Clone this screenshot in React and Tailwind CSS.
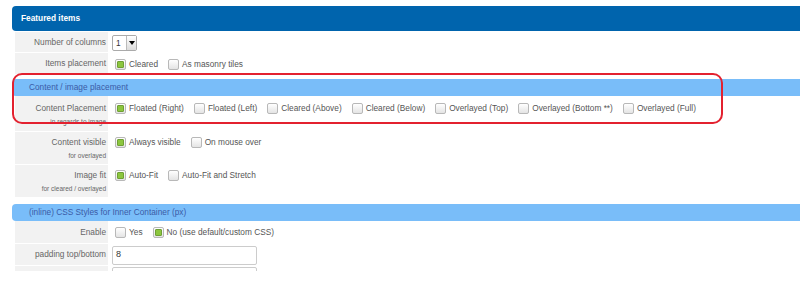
import React from "react";

const Check = ({ on }) => (
  <span className="w-[11px] h-[11px] shrink-0 border border-[#b8b8b8] rounded-[2px] bg-linear-to-b from-white to-[#e4e4e4] flex items-center justify-center">
    {on && <span className="w-[7px] h-[7px] bg-[#8cc63e] border border-[#6f9f34] rounded-[1px]" />}
  </span>
);

const Options = ({ items, checked }) => (
  <div className="flex items-center gap-[10px]">
    {items.map((t, i) => (
      <div key={t} className="flex items-center gap-[3px]">
        <Check on={i === checked} />
        <span className="leading-[11px] whitespace-nowrap">{t}</span>
      </div>
    ))}
  </div>
);

const Row = ({ label, sub, h, pt, center, children }) => (
  <div className={`flex ${h}`}>
    <div
      className={`w-[93px] ml-[3px] shrink-0 bg-[#f2f2f2] border-b border-white flex flex-col items-end pr-[2px] text-[#666] ${
        center ? "justify-center" : pt
      }`}
    >
      <span className="leading-[11px] whitespace-nowrap">{label}</span>
      {sub && <span className="text-[6.5px] leading-[9px] mt-[3px] whitespace-nowrap">{sub}</span>}
    </div>
    <div className={`flex-1 pl-[7px] flex ${center ? "items-center" : `items-start ${pt}`}`}>
      {children}
    </div>
  </div>
);

const Section = ({ title, className }) => (
  <div className={`h-[17px] bg-[#79bdf9] rounded-l-[4px] flex items-center pl-[17px] text-[#3b5ba6] ${className}`}>
    {title}
  </div>
);

export default function App() {
  return (
    <div className="w-[800px] h-[283px] bg-white overflow-hidden relative font-['Liberation_Sans',Arial,sans-serif] text-[8.3px] text-[#555]">
      <div className="pt-[6px] pl-[12px]">
        <div className="h-[25px] bg-[#0064ad] rounded-l-[4px] flex items-center pl-[9px] text-white font-bold">
          Featured items
        </div>
        <div className="mt-[1px]">
          <Row label="Number of columns" h="h-[21px]" center>
            <div className="w-[25px] h-[16px] -ml-[3px] border border-[#aaa] rounded-[2px] flex bg-white">
              <span className="flex-1 pl-[3px] leading-[14px] text-[#333]">1</span>
              <span className="w-[10px] border-l border-[#bbb] bg-linear-to-b from-white to-[#dcdcdc] flex items-center justify-center">
                <span className="w-0 h-0 border-l-[3px] border-r-[3px] border-t-[4px] border-l-transparent border-r-transparent border-t-black" />
              </span>
            </div>
          </Row>
          <Row label="Items placement" h="h-[22px]" center>
            <Options items={["Cleared", "As masonry tiles"]} checked={0} />
          </Row>
        </div>
        <Section title="Content / image placement" className="mt-[4px]" />
        <Row label="Content Placement" sub="in regards to image" h="h-[36px]" pt="pt-[7px]">
          <Options
            items={[
              "Floated (Right)",
              "Floated (Left)",
              "Cleared (Above)",
              "Cleared (Below)",
              "Overlayed (Top)",
              "Overlayed (Bottom **)",
              "Overlayed (Full)",
            ]}
            checked={0}
          />
        </Row>
        <Row label="Content visible" sub="for overlayed" h="h-[33px]" pt="pt-[5px]">
          <Options items={["Always visible", "On mouse over"]} checked={0} />
        </Row>
        <Row label="Image fit" sub="for cleared / overlayed" h="h-[33px]" pt="pt-[5px]">
          <Options items={["Auto-Fit", "Auto-Fit and Stretch"]} checked={0} />
        </Row>
        <Section title="(inline) CSS Styles for Inner Container (px)" className="mt-[6px]" />
        <Row label="Enable" h="h-[23px]" center>
          <Options items={["Yes", "No (use default/custom CSS)"]} checked={1} />
        </Row>
        <Row label="padding top/bottom" h="h-[22px]" center>
          <div className="w-[145px] h-[19px] -ml-[3px] border border-[#ccc] rounded-[2px] pl-[3px] flex items-center text-[9px] text-[#333]">
            8
          </div>
        </Row>
        <div className="h-[5px] overflow-hidden">
          <Row label="" h="h-[22px]" center>
            <div className="w-[145px] h-[19px] -ml-[3px] border border-[#ccc] rounded-[2px] self-start mt-[1px]" />
          </Row>
        </div>
      </div>
      <div className="absolute left-[12px] top-[73px] w-[711px] h-[51px] border-2 border-[#e3212f] rounded-[10px]" />
    </div>
  );
}
